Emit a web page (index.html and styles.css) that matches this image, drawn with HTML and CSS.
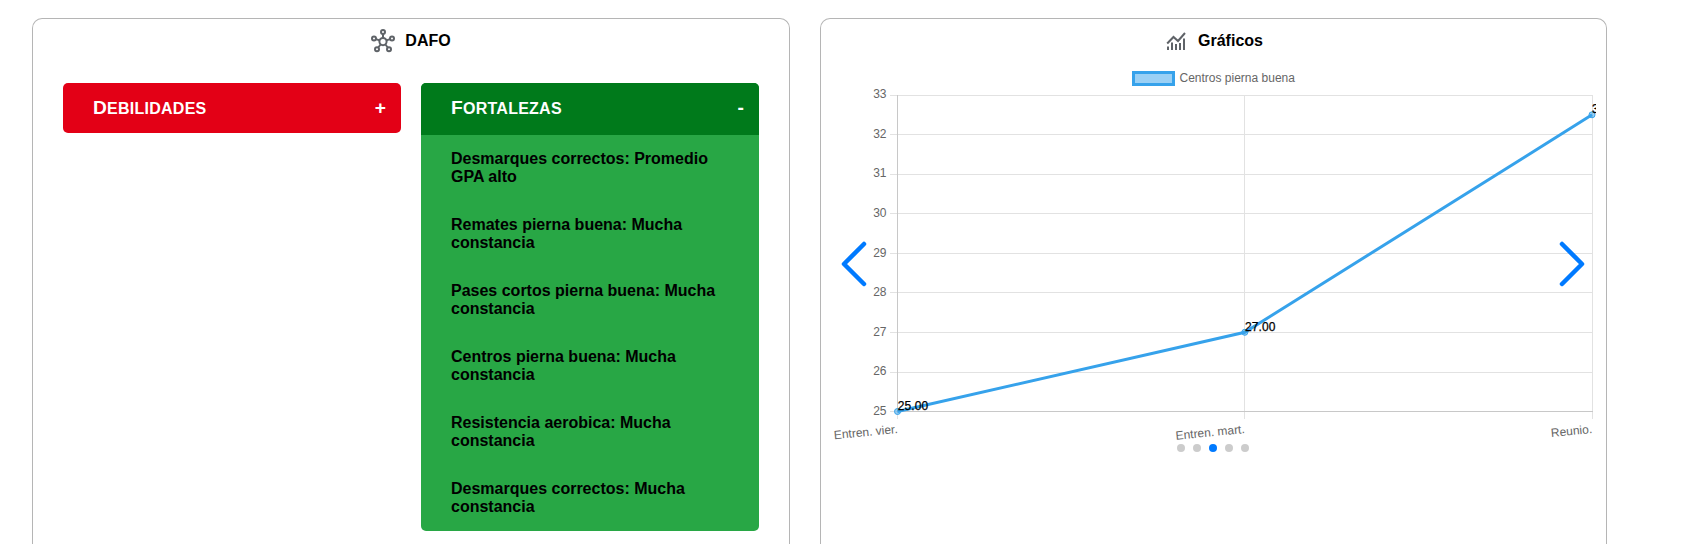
FILE: index.html
```html
<!DOCTYPE html>
<html lang="es">
<head>
<meta charset="utf-8">
<title>DAFO y Gráficos</title>
<link rel="stylesheet" href="styles.css">
</head>
<body>
<main class="board">
  <section class="card">
    <h2 class="card-title">
      <svg class="icon-hub" width="24" height="24" viewBox="0 0 24 24">
        <circle cx="12" cy="12.6" r="3.6"/>
        <circle cx="12" cy="3" r="2"/><circle cx="3" cy="9.5" r="2"/><circle cx="21" cy="9.5" r="2"/><circle cx="6" cy="20.2" r="2"/><circle cx="18" cy="20.2" r="2"/>
        <path d="M12 5v4M5 10.1l3.500 1.300M19 10.1l-3.500 1.300M7.200 18.500l2.400-3M16.800 18.500l-2.400-3"/>
      </svg>
      <span>DAFO</span>
    </h2>
    <div class="columns">
      <div class="panel panel-red">
        <h3 class="panel-head"><span class="name">Debilidades</span><span>+</span></h3>
      </div>
      <div class="panel panel-green">
        <h3 class="panel-head open"><span class="name">Fortalezas</span><span>-</span></h3>
        <ul class="items">
          <li>Desmarques correctos: Promedio GPA alto</li>
          <li>Remates pierna buena: Mucha constancia</li>
          <li>Pases cortos pierna buena: Mucha constancia</li>
          <li>Centros pierna buena: Mucha constancia</li>
          <li>Resistencia aerobica: Mucha constancia</li>
          <li>Desmarques correctos: Mucha constancia</li>
        </ul>
      </div>
    </div>
  </section>

  <section class="card">
    <h2 class="card-title">
      <svg class="icon-chart" width="24" height="24" viewBox="0 0 24 24">
        <path d="M3.200 14.500L9.500 8l4.500 4L21 4"/>
        <path d="M4 21v-3.500M8 21v-7.500M12 21v-6M16 21v-7M20 21V9.500"/>
      </svg>
      <span>Gráficos</span>
    </h2>
    <div class="carousel">
      <svg class="chart" width="765" height="376" viewBox="831 64 765 376">
        <rect class="legend-box" x="1133.500" y="72.500" width="40" height="12"/>
        <text class="label" x="1179.500" y="82">Centros pierna buena</text>
        <path class="grid" d="M890 95.500H1593M890 134.500H1593M890 174.500H1593M890 213.500H1593M890 253.500H1593M890 292.500H1593M890 332.500H1593M890 372.500H1593M1244.500 95V419M1592.500 95V419M897.500 411V419M890 411.500H897"/>
        <path class="axis" d="M897.500 95V411M897 411.500H1593"/>
        <g class="label end">
          <text x="886.500" y="98">33</text><text x="886.500" y="138">32</text><text x="886.500" y="177">31</text>
          <text x="886.500" y="217">30</text><text x="886.500" y="257">29</text><text x="886.500" y="296">28</text>
          <text x="886.500" y="336">27</text><text x="886.500" y="375">26</text><text x="886.500" y="415">25</text>
          <text transform="translate(898 433) rotate(-5.500)">Entren. vier.</text>
          <text transform="translate(1245 433) rotate(-5.500)">Entren. mart.</text>
          <text transform="translate(1592.500 433) rotate(-5.500)">Reunio.</text>
        </g>
        <path class="line" d="M897.500 411.500L1244.800 332.300L1592 114.800"/>
        <g class="point"><circle cx="897.500" cy="411.500" r="3"/><circle cx="1244.800" cy="332.300" r="3"/><circle cx="1592" cy="114.800" r="3"/></g>
        <g class="value"><text x="897.800" y="410">25.00</text><text x="1245" y="331">27.00</text><text x="1592" y="113">32.50</text></g>
      </svg>
      <svg class="arrow prev" width="26" height="46" viewBox="0 0 26 46"><path d="M23 3L3 23l20 20"/></svg>
      <svg class="arrow next" width="26" height="46" viewBox="0 0 26 46"><path d="M3 3L23 23L3 43"/></svg>
      <div class="dots"><i></i><i></i><i class="active"></i><i></i><i></i></div>
    </div>
  </section>
</main>
</body>
</html>
```
FILE: styles.css
```css
* { box-sizing: border-box; }
body { margin: 0; height: 544px; overflow: hidden; background: #fff; font-family: "Liberation Sans", Arial, sans-serif; color: #000; }
.board { display: grid; grid-template-columns: 758px 787px; gap: 30px; height: 544px; padding: 18px 0 0 32px; }
.card { height: 526px; border: 1px solid #b5b5b5; border-bottom: 0; border-radius: 10px 10px 0 0; }
.card-title { display: flex; align-items: center; justify-content: center; gap: 10px; height: 44px; margin: 0; font-size: 16px; line-height: 18px; }
.card-title svg { fill: none; stroke: #5f6368; }
.icon-hub { stroke-width: 2; }
.icon-chart { stroke-width: 2; }
.columns { display: grid; grid-template-columns: 338px 338px; gap: 20px; align-items: start; padding: 20px 30px 0; }
.panel { overflow: hidden; border-radius: 5px; }
.panel-red { background: #e30016; }
.panel-green { background: #28a745; }
.panel-head { display: flex; align-items: baseline; justify-content: space-between; height: 50px; margin: 0; padding: 14px 15px 0 30px; color: #fff; font-size: 19.200px; line-height: 22px; }
.panel-head.open { height: 52px; background: #007a1b; }
.name { font-size: 16px; letter-spacing: 0.250px; text-transform: uppercase; }
.name::first-letter { font-size: 19.200px; }
.items { margin: 0; padding: 0; list-style: none; font-size: 16px; font-weight: bold; line-height: 18px; }
.items li { padding: 15px 30px; }
.carousel { position: relative; padding: 1px 10px 0; }
.chart { display: block; overflow: hidden; }
.label { fill: #666; font-size: 12px; }
.end { text-anchor: end; }
.value { fill: #000; stroke: #000; stroke-width: 0.250; font-size: 12px; letter-spacing: 0.100px; }
.grid { fill: none; stroke: #e2e2e2; }
.axis { fill: none; stroke: #c8c8c8; }
.line { fill: none; stroke: #36a2eb; stroke-width: 3; }
.legend-box { fill: #9ad0f5; stroke: #36a2eb; stroke-width: 3; }
.point { fill: #36a2eb80; stroke: #36a2eb; }
.arrow { position: absolute; top: 178px; fill: none; stroke: #007aff; stroke-width: 4.500; stroke-linecap: round; stroke-linejoin: round; }
.prev { left: 20px; }
.next { right: 21px; }
.dots { display: flex; justify-content: center; gap: 8px; padding: 4px 1px 0 0; }
.dots i { width: 8px; height: 8px; border-radius: 50%; background: #ccc; }
.dots .active { background: #007aff; }
```
